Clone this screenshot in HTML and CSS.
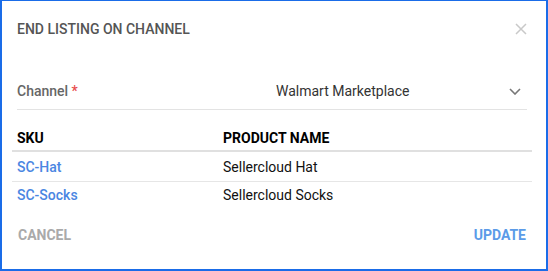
FILE: index.html
```html
<!DOCTYPE html>
<html>
<head>
<meta charset="utf-8">
<link rel="stylesheet" href="styles.css">
</head>
<body>
<div class="dialog">
  <div class="dialog-header">
    <div class="title">END LISTING ON CHANNEL</div>
    <button class="close" aria-label="Close">
      <svg width="12" height="12" viewBox="0 0 12 12"><path d="M1 1L11 11M11 1L1 11" stroke="#c9c9c9" stroke-width="1.5" fill="none"/></svg>
    </button>
  </div>
  <div class="channel-row">
    <div class="label">Channel <span class="req">*</span></div>
    <div class="value">Walmart Marketplace</div>
    <svg class="chevron" width="12" height="7" viewBox="0 0 12 7"><path d="M1 1L6 6L11 1" stroke="#777" stroke-width="1.6" fill="none"/></svg>
  </div>
  <div class="table">
    <div class="row head">
      <div class="cell">SKU</div>
      <div class="cell">PRODUCT NAME</div>
    </div>
    <div class="row first">
      <div class="cell sku">SC-Hat</div>
      <div class="cell">Sellercloud Hat</div>
    </div>
    <div class="row last">
      <div class="cell sku">SC-Socks</div>
      <div class="cell">Sellercloud Socks</div>
    </div>
  </div>
  <div class="footer">
    <button class="btn cancel">CANCEL</button>
    <button class="btn update">UPDATE</button>
  </div>
</div>
</body>
</html>
```

FILE: styles.css
```css
html, body {
  margin: 0;
  padding: 0;
  background: #fff;
}
body {
  font-family: Roboto, "Liberation Sans", sans-serif;
  font-size: 14px;
  line-height: 20px;
}
.dialog {
  width: 548px;
  height: 271px;
  box-sizing: border-box;
  border-style: solid;
  border-color: #1a6ce8;
  border-width: 1px 2px 2px 2px;
  padding: 0 19px 0 15px;
  background: #fff;
}
.dialog-header {
  display: flex;
  align-items: center;
  justify-content: space-between;
  padding-top: 18px;
  margin-bottom: 34px;
}
.title {
  font-size: 14px;
  font-weight: 500;
  color: #555;
  line-height: 20px;
}
.close {
  border: 0;
  background: none;
  padding: 0;
  width: 12px;
  height: 12px;
  display: flex;
}
.channel-row {
  display: grid;
  grid-template-columns: 259px 1fr auto;
  align-items: center;
  height: 36px;
  border-bottom: 1px solid #e3e3e3;
  padding-right: 6px;
}
.label {
  font-weight: 500;
  color: #666;
}
.req {
  color: #e84c4c;
}
.value {
  color: #333;
}
.chevron {
  display: block;
}
.table {
  margin: 0 -5px;
}
.row {
  display: grid;
  grid-template-columns: 206px 1fr;
}
.cell {
  padding: 0 5px;
  color: #111;
}
.row.head {
  padding-top: 18px;
  padding-bottom: 2px;
  border-bottom: 2px solid #e0e0e0;
}
.row.head .cell {
  font-weight: 700;
  color: #000;
}
.row.first {
  padding-top: 5px;
  padding-bottom: 4px;
  border-bottom: 1px solid #e6e6e6;
}
.row.last {
  padding-top: 3px;
  padding-bottom: 4px;
}
.sku {
  color: #4a86e2;
  font-weight: 500;
}
.footer {
  display: flex;
  justify-content: space-between;
  margin-top: 16px;
}
.btn {
  border: 0;
  background: none;
  padding: 0;
  font-family: Roboto, "Liberation Sans", sans-serif;
  font-size: 14px;
  line-height: 20px;
  font-weight: 700;
}
.cancel {
  color: #aaa;
  margin-left: 1px;
}
.update {
  color: #5b9be8;
  margin-right: 1px;
}
```
